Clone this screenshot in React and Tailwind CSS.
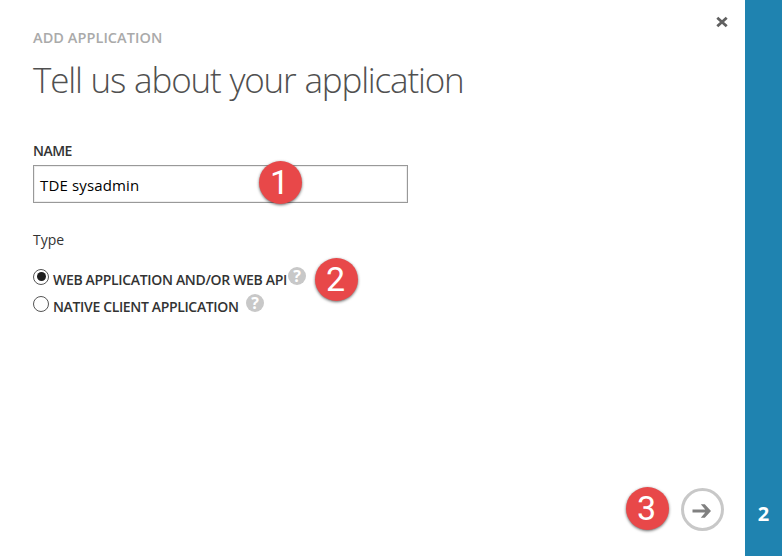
function StepBadge({ children, className }) {
  return (
    <span
      className={`absolute flex size-[43px] items-center justify-center rounded-full bg-[#e84849] font-['Roboto'] text-[34px] leading-none text-white shadow-[0_1px_3px_rgba(0,0,0,0.6)] ${className}`}
    >
      <span className="-translate-x-px -translate-y-px">{children}</span>
    </span>
  );
}

function HelpIcon({ className }) {
  return (
    <span
      className={`flex size-[18px] shrink-0 items-center justify-center rounded-full bg-[#c8c8c8] text-[16px] leading-none font-bold text-white ${className}`}
    >
      ?
    </span>
  );
}

function RadioOption({ label, checked, labelClass, helpClass }) {
  return (
    <div className="flex h-[27px] items-start">
      <span className="mt-[0.5px] flex size-4 shrink-0 items-center justify-center rounded-full border border-[#555] bg-white">
        {checked && <span className="size-[9px] rounded-full bg-[#1e1e1e]" />}
      </span>
      <span className={`mt-[2px] ml-1 text-[14px] leading-5 font-semibold whitespace-nowrap text-[#333] ${labelClass}`}>
        {label}
      </span>
      <HelpIcon className={helpClass} />
    </div>
  );
}

export default function App() {
  return (
    <div className="flex h-[556px] w-[782px] overflow-hidden bg-white font-['Open_Sans',sans-serif]">
      <main className="relative flex w-[745px] flex-col pl-[33px]">
        <button aria-label="Close" className="absolute top-4 right-[17.5px] size-3">
          <svg viewBox="0 0 12 12" className="size-3" stroke="#606060" strokeWidth="2.8">
            <path d="M1.3 1.7 10.7 10.3M10.7 1.7 1.3 10.3" />
          </svg>
        </button>

        <p className="mt-7 h-5 text-[14.5px] leading-5 font-semibold tracking-[0.06px] whitespace-nowrap text-[#aaa]">
          <span>ADD APPLICATION</span>
        </p>
        <h1 className="mt-2 h-12 text-[35px] leading-[48px] font-light tracking-[-1.18px] [word-spacing:1px] whitespace-nowrap text-[#505050]">
          <span>Tell us about your application</span>
        </h1>

        <label className="mt-[37px] h-5 text-[14px] leading-5 font-semibold tracking-[-0.5px] text-[#333]">NAME</label>
        <div className="relative mt-1 flex h-[38px] w-[375px] items-center border border-[#999] pl-[6px] shadow-[inset_0_0_0_1px_#eee]">
          <span className="mt-[2px] text-[15px] leading-5 tracking-[0.15px] text-black">TDE sysadmin</span>
          <StepBadge className="top-[-5px] left-[225px]">1</StepBadge>
        </div>

        <p className="mt-[27px] h-5 text-[14px] leading-5 text-[#333]">Type</p>

        <div className="relative mt-[18px] w-[325px]">
          <RadioOption
            checked
            label="WEB APPLICATION AND/OR WEB API"
            labelClass="tracking-[-0.33px] w-[234px]"
            helpClass="ml-[1px] mt-[-1px]"
          />
          <RadioOption
            label="NATIVE CLIENT APPLICATION"
            labelClass="tracking-[-0.35px] w-[186px]"
            helpClass="ml-[7px] mt-[-1px]"
          />
          <StepBadge className="top-[-10px] right-0">2</StepBadge>
        </div>

        <div className="relative mt-auto mr-[21px] mb-[25px] flex justify-end">
          <StepBadge className="top-[-1px] right-[55px]">3</StepBadge>
          <button
            aria-label="Next"
            className="flex size-[43px] items-center justify-center rounded-full border-[3px] border-[#c8c8c8]"
          >
            <svg viewBox="0 0 20 16" className="h-4 w-5 -translate-x-px translate-y-px" fill="#808080">
              <path d="M0.5 6.4H13.2L8.8 1.2H12.8L19 8 12.8 14.8H8.8L13.2 9.6H0.5Z" />
            </svg>
          </button>
        </div>
      </main>
      <aside className="flex w-[37px] items-end justify-center bg-[#1f83b0] pb-7 text-[20px] leading-7 font-bold text-white">
        2
      </aside>
    </div>
  );
}
